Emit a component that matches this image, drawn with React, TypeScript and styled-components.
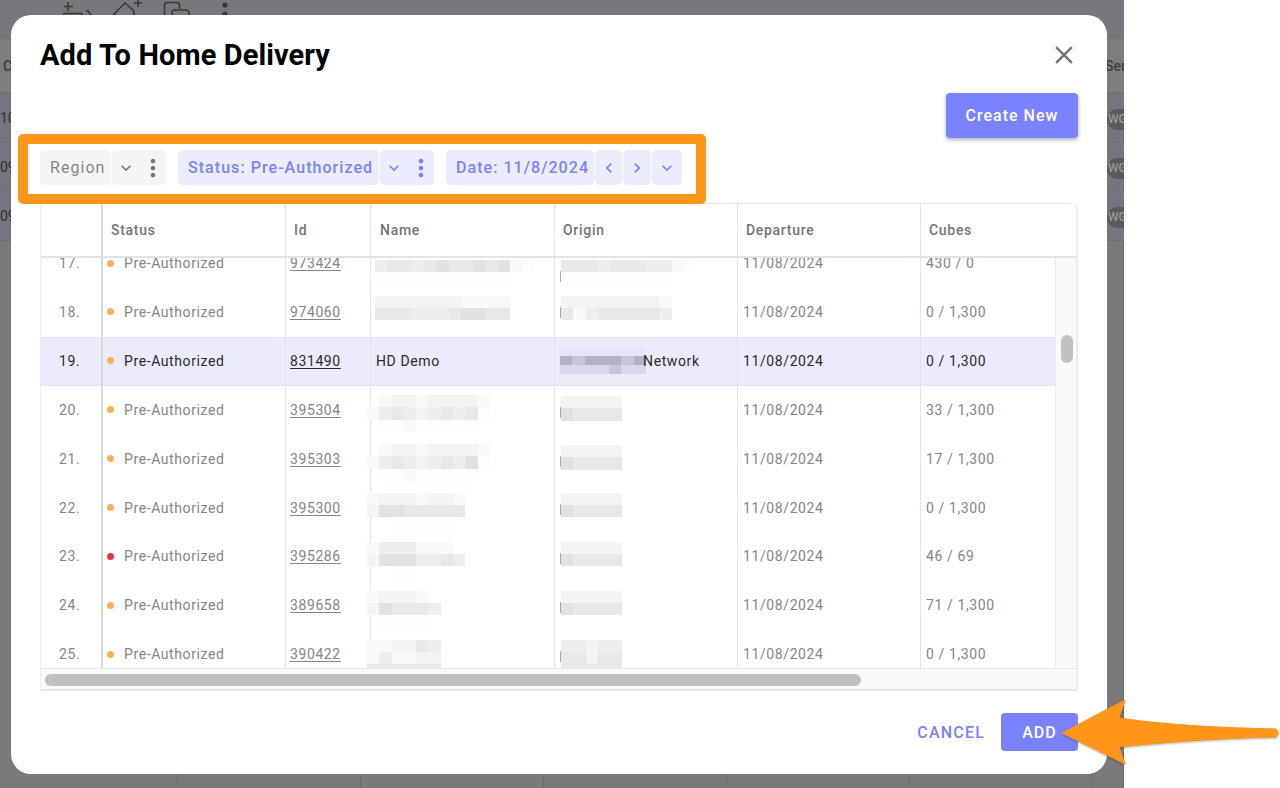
import React from 'react';
import styled, { createGlobalStyle } from 'styled-components';

const GlobalStyle = createGlobalStyle`
  html, body {
    margin: 0;
    background: #fff;
    font-family: Roboto, "Liberation Sans", sans-serif;
  }
  * { box-sizing: border-box; }
`;

const ACCENT = '#7a82ff';
const ACCENT_TEXT = '#7a82fb';
const CHIP = '#ebecfd';
const COLUMNS = '62px 183px 85px 184px 183px 183px 136px';

const SHADES: Record<string, string> = {
  '.': 'transparent',
  a: '#fdfdfd',
  b: '#f9f9f9',
  c: '#f4f4f4',
  d: '#eeeeee',
  e: '#e8e8e8',
  f: '#e1e1e1',
  g: '#e4e5f8',
  h: '#d8d8ec',
  i: '#c6c5da',
  j: '#b2b1c5',
};

/* ---------- page behind the dialog ---------- */

const Page = styled.div`
  position: relative;
  width: 1280px;
  height: 788px;
  overflow: hidden;
  background: #fff;
`;

const Behind = styled.div`
  width: 1124px;
  height: 788px;
  overflow: hidden;
  display: flex;
  flex-direction: column;
  background: #7a7a7a;
  color: #333;
  font-size: 14px;
`;

const TopBar = styled.div`
  height: 38px;
  flex: none;
  display: flex;
  align-items: flex-start;
  padding-left: 62px;
  gap: 18px;
  background: #78787c;
  color: #38383b;
`;

const TopIcon = styled.svg`
  width: 32px;
  height: 32px;
  overflow: visible;
  fill: none;
  stroke: currentColor;
  stroke-width: 1.6;
`;

const TopDots = styled(TopIcon)`
  fill: currentColor;
  stroke: none;
`;

const BehindHead = styled.div`
  height: 56px;
  flex: none;
  display: flex;
  align-items: center;
  justify-content: space-between;
  background: #7e7e7e;
  border-top: 1px solid #737373;
  border-bottom: 2px solid #707070;
  padding-left: 3px;
  font-weight: 500;
  color: #3c3c3c;
  white-space: nowrap;
`;

const HeadEnd = styled.span`
  margin-right: -2px;
`;

const BehindRow = styled.div`
  height: 49px;
  flex: none;
  display: flex;
  align-items: center;
  justify-content: space-between;
  background: #75757f;
  border-bottom: 1px solid #6e6e78;
  color: #2e2e33;
`;

const Pill = styled.span`
  width: 36px;
  height: 21px;
  margin: 2px -19px 0 0;
  padding-left: 1px;
  border-radius: 10px;
  background: #5a5a5c;
  color: #999;
  font-size: 12px;
  font-weight: 500;
  line-height: 21px;
`;

const BehindFill = styled.div`
  flex: 1;
  display: grid;
  grid-template-columns: 178px repeat(5, 183px) 1fr;
`;

const BehindCell = styled.div`
  border-right: 1px solid #6c6c6c;
`;

/* ---------- dialog ---------- */

const Dialog = styled.div`
  position: absolute;
  left: 11px;
  top: 15px;
  width: 1096px;
  height: 759px;
  display: flex;
  flex-direction: column;
  padding: 0 29px;
  background: #fff;
  border-radius: 20px;
`;

const TitleRow = styled.div`
  height: 78px;
  flex: none;
  display: flex;
  align-items: flex-start;
  justify-content: space-between;
  padding-top: 21px;
`;

const Title = styled.h1`
  margin: 0;
  font-size: 29px;
  line-height: 38px;
  font-weight: 700;
  letter-spacing: 0.1px;
  color: #000;
`;

const CloseButton = styled.button`
  width: 30px;
  height: 30px;
  margin: 4px -1px 0 0;
  padding: 0;
  border: 0;
  background: none;
  color: #757575;
  svg { display: block; width: 30px; height: 30px; fill: currentColor; }
`;

const ActionRow = styled.div`
  height: 57px;
  flex: none;
  display: flex;
  justify-content: flex-end;
  align-items: flex-start;
`;

const PrimaryButton = styled.button<{ $w: number; $h: number }>`
  width: ${(p) => p.$w}px;
  height: ${(p) => p.$h}px;
  padding: 0;
  border: 0;
  border-radius: 4px;
  background: ${ACCENT};
  color: #fff;
  font-family: inherit;
  font-size: 16px;
  font-weight: 500;
  letter-spacing: 1px;
`;

const RaisedButton = styled(PrimaryButton)`
  box-shadow: 0 2px 4px rgba(0, 0, 0, 0.3);
`;

const Filters = styled.div`
  height: 54px;
  flex: none;
  display: flex;
  align-items: flex-start;
  gap: 12px;
`;

const FilterGroup = styled.div`
  display: flex;
  gap: 1px;
`;

const Segment = styled.div<{ $w: number; $on?: boolean }>`
  width: ${(p) => p.$w}px;
  height: 35px;
  display: flex;
  align-items: center;
  justify-content: center;
  border-radius: 5px;
  background: ${(p) => (p.$on ? CHIP : '#f5f5f5')};
  color: ${(p) => (p.$on ? ACCENT_TEXT : '#757575')};
  svg { display: block; flex: none; width: 20px; height: 20px; fill: currentColor; }
`;

const SegmentLabel = styled(Segment)`
  justify-content: flex-start;
  padding-left: 10px;
  color: ${(p) => (p.$on ? ACCENT_TEXT : '#858585')};
  font-size: 16px;
  font-weight: ${(p) => (p.$on ? 500 : 400)};
  letter-spacing: 1.05px;
  white-space: nowrap;
`;

const SegmentMenu = styled(Segment)`
  justify-content: flex-start;
  padding-left: 4px;
  svg + svg { width: 28px; height: 28px; margin-left: 3px; }
`;

const TableFrame = styled.div`
  height: 488px;
  flex: none;
  display: flex;
  flex-direction: column;
  margin-top: -1px;
  border-left: 1px solid #efefef;
  border-right: 2px solid #eeeeee;
  border-bottom: 2px solid #e8e8e8;
  border-top-right-radius: 8px;
  overflow: hidden;
`;

const HeadRow = styled.div`
  height: 55px;
  flex: none;
  display: grid;
  grid-template-columns: ${COLUMNS} 1fr;
  border-top: 1px solid #e2e2e2;
  border-bottom: 2px solid #e3e3e3;
`;

const HeadCell = styled.div<{ $heavy?: boolean }>`
  display: flex;
  align-items: center;
  padding-left: 8px;
  border-right: ${(p) => (p.$heavy ? '2px solid #d9d9d9' : '1px solid #e4e4e4')};
  color: #757575;
  font-size: 14px;
  font-weight: 500;
  letter-spacing: 0.7px;
  &:nth-child(4) { padding-left: 9px; }
  &:nth-child(7) { grid-column: span 2; border-right: 0; }
`;

const TableMiddle = styled.div`
  height: 410px;
  flex: none;
  display: flex;
`;

const RowsViewport = styled.div`
  flex: 1;
  overflow: hidden;
`;

const Rows = styled.div`
  margin-top: -18.4px;
`;

const Row = styled.div<{ $selected?: boolean }>`
  height: 48.9px;
  display: grid;
  grid-template-columns: ${COLUMNS};
  background: ${(p) => (p.$selected ? '#ebebfc' : 'transparent')};
  color: ${(p) => (p.$selected ? '#2b2b2b' : '#858585')};
  font-size: 14px;
  letter-spacing: 0.6px;
  box-shadow: ${(p) => (p.$selected ? 'inset 0 1px 0 #e4e5f5, inset 0 -1px 0 #e4e5f5' : 'none')};
`;

const Cell = styled.div<{ $pad: number; $heavy?: boolean }>`
  display: flex;
  align-items: center;
  min-width: 0;
  padding: 0 0 2px ${(p) => p.$pad}px;
  border-right: ${(p) => (p.$heavy ? '2px solid #d9d9d9' : '1px solid #e4e4e4')};
  white-space: nowrap;
`;

const Dot = styled.span<{ $red?: boolean }>`
  width: 7px;
  height: 7px;
  flex: none;
  margin-right: 10px;
  border-radius: 50%;
  background: ${(p) => (p.$red ? '#e53935' : '#ffb054')};
`;

const IdLink = styled.span`
  text-decoration: underline;
  text-underline-offset: 2px;
`;

const OverSmudge = styled.span`
  position: relative;
  margin-left: -3px;
`;

const Smudge = styled.div<{ $top: number; $left: number; $cols: number; $rowH: number }>`
  align-self: flex-start;
  flex: none;
  position: relative;
  display: grid;
  grid-template-columns: repeat(${(p) => p.$cols}, 12.3px);
  grid-auto-rows: ${(p) => p.$rowH}px;
  margin-top: ${(p) => p.$top}px;
  margin-left: ${(p) => p.$left}px;
`;

const SmudgeCell = styled.span<{ $shade: string }>`
  background: ${(p) => p.$shade};
`;

const Tick = styled.span`
  position: absolute;
  left: -1px;
  top: 11px;
  width: 1px;
  height: 11px;
  background: #a8a8a8;
`;

const VTrack = styled.div`
  width: 21px;
  flex: none;
  padding: 77px 0 0 5px;
  background: #fafafa;
  border-left: 1px solid #ececec;
`;

const VThumb = styled.div`
  width: 12px;
  height: 28px;
  border-radius: 6px;
  background: #c1c1c1;
`;

const HTrack = styled.div`
  flex: 1;
  padding: 5px 0 0 4px;
  background: #fafafa;
  border-top: 1px solid #e8e8e8;
`;

const HThumb = styled.div`
  width: 816px;
  height: 12px;
  border-radius: 6px;
  background: #c1c1c1;
`;

const Footer = styled.div`
  flex: 1;
  display: flex;
  justify-content: flex-end;
  align-items: flex-start;
  gap: 16px;
  padding-top: 22px;
`;

const TextButton = styled.button`
  height: 38px;
  padding: 0;
  border: 0;
  background: none;
  color: ${ACCENT_TEXT};
  font-family: inherit;
  font-size: 16px;
  font-weight: 500;
  letter-spacing: 1.2px;
`;

/* ---------- annotations lying over the screenshot ---------- */

const Highlight = styled.div`
  position: absolute;
  left: 18px;
  top: 134px;
  width: 688px;
  height: 70px;
  border: 10.5px solid #ff9619;
  border-radius: 5px;
`;

const ArrowMark = styled.svg`
  position: absolute;
  left: 1055px;
  top: 692px;
  width: 225px;
  height: 80px;
  filter: drop-shadow(0 1px 1px rgba(0, 0, 0, 0.3));
`;

/* ---------- icons ---------- */

const Chevron = ({ dir }: { dir: 'down' | 'left' | 'right' }) => {
  const d = {
    down: 'M7.41 8.59 12 13.17l4.59-4.58L18 10l-6 6-6-6z',
    left: 'M15.41 16.59 10.83 12l4.58-4.59L14 6l-6 6 6 6z',
    right: 'M8.59 16.59 13.17 12 8.59 7.41 10 6l6 6-6 6z',
  }[dir];
  return (
    <svg viewBox="0 0 24 24">
      <path d={d} />
    </svg>
  );
};

const Kebab = () => (
  <svg viewBox="0 0 24 24">
    <path d="M12 8c1.1 0 2-.9 2-2s-.9-2-2-2-2 .9-2 2 .9 2 2 2zm0 2c-1.1 0-2 .9-2 2s.9 2 2 2 2-.9 2-2-.9-2-2-2zm0 6c-1.1 0-2 .9-2 2s.9 2 2 2 2-.9 2-2-.9-2-2-2z" />
  </svg>
);

/* ---------- data ---------- */

type Blur = { top: number; left: number; cols: number; rows: string[]; tick?: boolean; rowH?: number };

const blur = (top: number, left: number, rows: string[], tick?: boolean, rowH?: number): Blur => ({
  top,
  left,
  cols: rows[0].length,
  rows,
  tick,
  rowH,
});

const mid = ['bcccbccb', 'cffeeeee', '..aaaaa.'];
const short = ['bcccb.', 'cfeeed', '.aaaa.'];
const originShort = ['ccccc', 'feeee'];

const ROWS: {
  n: number;
  id: string;
  cubes: string;
  red?: boolean;
  selected?: boolean;
  name?: string;
  originBlur?: Blur;
  nameBlur?: Blur;
}[] = [
  {
    n: 17,
    id: '973424',
    cubes: '430 / 0',
    nameBlur: blur(20, -1, ['deedefeefefba', 'aaaaaaaaaaa..']),
    originBlur: blur(20, 0, ['eeedeeeddba', 'aaaaaaaaa..'], true),
  },
  {
    n: 18,
    id: '974060',
    cubes: '0 / 1,300',
    nameBlur: blur(7, -1, ['cccccccbbbb', 'eeedddeffee']),
    originBlur: blur(7, 0, ['ccccccccb', 'ebdeeeeed'], true),
  },
  {
    n: 19,
    id: '831490',
    cubes: '0 / 1,300',
    selected: true,
    name: 'HD Demo',
    originBlur: blur(10, -1, ['ggggggg', 'jijjjij', 'hhhhihh'], false, 9),
  },
  {
    n: 20,
    id: '395304',
    cubes: '33 / 1,300',
    nameBlur: blur(9, -9, ['.bccbccccb', 'bdedcdedea', '.aabaaaaa.']),
    originBlur: blur(10, 0, originShort, true),
  },
  {
    n: 21,
    id: '395303',
    cubes: '17 / 1,300',
    nameBlur: blur(9, -9, ['.bccbccccb', 'bdedcdedfa', '.aabaaaaa.']),
    originBlur: blur(10, 0, originShort, true),
  },
  {
    n: 22,
    id: '395300',
    cubes: '0 / 1,300',
    nameBlur: blur(9, -9, mid),
    originBlur: blur(9, 0, originShort, true),
  },
  {
    n: 23,
    id: '395286',
    cubes: '46 / 69',
    red: true,
    nameBlur: blur(9, -9, ['bdddbbb.', 'cfffdded', '..aa....']),
    originBlur: blur(9, 0, originShort, true),
  },
  {
    n: 24,
    id: '389658',
    cubes: '71 / 1,300',
    nameBlur: blur(9, -9, short),
    originBlur: blur(9, 0, originShort, true),
  },
  {
    n: 25,
    id: '390422',
    cubes: '0 / 1,300',
    nameBlur: blur(9, -9, ['bbcced', 'bdbbcc', 'eeeeee']),
    originBlur: blur(9, 0, ['ddcdd', 'eecee', 'eeeee'], true),
  },
];

const BlurBlock = ({ data }: { data: Blur }) => (
  <Smudge $top={data.top} $left={data.left} $cols={data.cols} $rowH={data.rowH ?? 12.2}>
    {data.rows.flatMap((row, y) =>
      row.split('').map((c, x) => <SmudgeCell key={`${y}-${x}`} $shade={SHADES[c]} />)
    )}
    {data.tick && <Tick />}
  </Smudge>
);

const HEADERS = ['', 'Status', 'Id', 'Name', 'Origin', 'Departure', 'Cubes'];

export default function App() {
  return (
    <Page>
      <GlobalStyle />
      <Behind>
        <TopBar>
          <TopIcon viewBox="0 0 32 32">
            <path d="M6 2v9M2 6.500h9M2 13.500h18M2 13v4M20 13v4M24 11h2l4 5v4" />
          </TopIcon>
          <TopIcon viewBox="0 0 32 32">
            <path d="M1 15 13 3l9 8M3 14v6M22 11v9M26 -1v8M22 3h8" />
          </TopIcon>
          <TopIcon viewBox="0 0 32 32">
            <path d="M2.500 20V5c0-1.500 1-2.500 2.500-2.500h10c1.500 0 2.500 1 2.500 2.500v4M10 16v-3c0-2 1-3 3-3h11c2 0 3 1 3 3v3" />
          </TopIcon>
          <TopDots viewBox="0 0 32 32">
            <circle cx="13" cy="5" r="2.6" />
            <circle cx="13" cy="14" r="2.6" />
          </TopDots>
        </TopBar>
        <BehindHead>
          <span>C</span>
          <HeadEnd>Ser</HeadEnd>
        </BehindHead>
        {['10', '09', '09'].map((t, i) => (
          <BehindRow key={i}>
            <span>{t}</span>
            <Pill>WG</Pill>
          </BehindRow>
        ))}
        <BehindFill>
          {[0, 1, 2, 3, 4, 5, 6].map((c) => (
            <BehindCell key={c} />
          ))}
        </BehindFill>
      </Behind>

      <Dialog>
        <TitleRow>
          <Title>Add To Home Delivery</Title>
          <CloseButton aria-label="Close">
            <svg viewBox="0 0 24 24">
              <path d="M19 6.41 17.59 5 12 10.59 6.41 5 5 6.41 10.59 12 5 17.59 6.41 19 12 13.41 17.59 19 19 17.59 13.41 12z" />
            </svg>
          </CloseButton>
        </TitleRow>

        <ActionRow>
          <RaisedButton $w={132} $h={45}>Create New</RaisedButton>
        </ActionRow>

        <Filters>
          <FilterGroup>
            <SegmentLabel $w={71}>Region</SegmentLabel>
            <SegmentMenu $w={54}><Chevron dir="down" /><Kebab /></SegmentMenu>
          </FilterGroup>
          <FilterGroup>
            <SegmentLabel $w={201} $on>Status: Pre-Authorized</SegmentLabel>
            <SegmentMenu $w={54} $on><Chevron dir="down" /><Kebab /></SegmentMenu>
          </FilterGroup>
          <FilterGroup>
            <SegmentLabel $w={148} $on>Date: 11/8/2024</SegmentLabel>
            <Segment $w={27} $on><Chevron dir="left" /></Segment>
            <Segment $w={28} $on><Chevron dir="right" /></Segment>
            <Segment $w={30} $on><Chevron dir="down" /></Segment>
          </FilterGroup>
        </Filters>

        <TableFrame>
          <HeadRow>
            {HEADERS.map((h, i) => (
              <HeadCell key={i} $heavy={i === 0}>{h}</HeadCell>
            ))}
          </HeadRow>
          <TableMiddle>
            <RowsViewport>
              <Rows>
                {ROWS.map((r) => (
                  <Row key={r.n} $selected={r.selected}>
                    <Cell $pad={18} $heavy>{r.n}.</Cell>
                    <Cell $pad={4}>
                      <Dot $red={r.red} />
                      Pre-Authorized
                    </Cell>
                    <Cell $pad={4}>
                      <IdLink>{r.id}</IdLink>
                    </Cell>
                    <Cell $pad={5}>
                      {r.nameBlur ? <BlurBlock data={r.nameBlur} /> : r.name}
                    </Cell>
                    <Cell $pad={6}>
                      {r.originBlur && <BlurBlock data={r.originBlur} />}
                      {r.selected && <OverSmudge>Network</OverSmudge>}
                    </Cell>
                    <Cell $pad={5}>11/08/2024</Cell>
                    <Cell $pad={5}>{r.cubes}</Cell>
                  </Row>
                ))}
              </Rows>
            </RowsViewport>
            <VTrack>
              <VThumb />
            </VTrack>
          </TableMiddle>
          <HTrack>
            <HThumb />
          </HTrack>
        </TableFrame>

        <Footer>
          <TextButton>CANCEL</TextButton>
          <PrimaryButton $w={77} $h={38}>ADD</PrimaryButton>
        </Footer>
      </Dialog>

      <Highlight />
      <ArrowMark viewBox="0 0 225 80">
        <path
          d="M7 41 70 8 64 26C110 33 170 36 221 37Q225 41 221 45C170 46 110 50 64 55L70 72Z"
          fill="#ff9619"
          stroke="#ff9619"
          strokeLinejoin="round"
        />
      </ArrowMark>
    </Page>
  );
}
